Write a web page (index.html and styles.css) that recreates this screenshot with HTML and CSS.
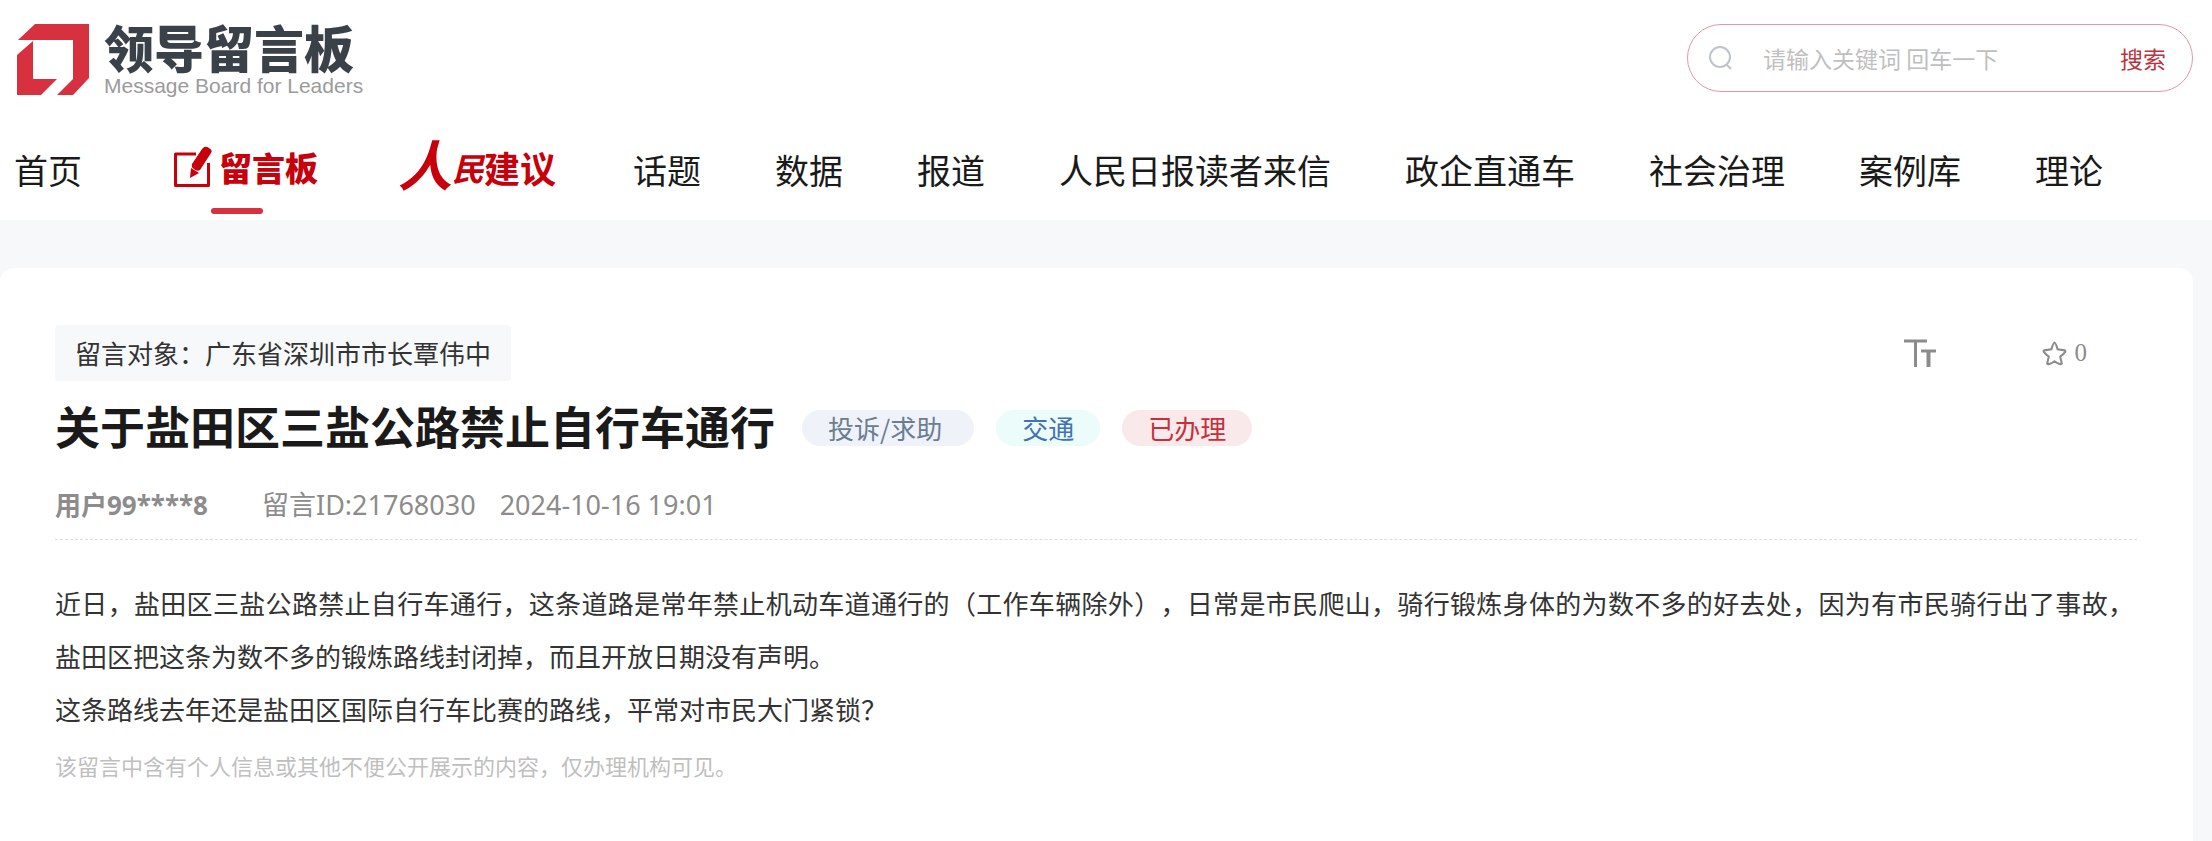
FILE: index.html
```html
<!DOCTYPE html>
<html lang="zh-CN">
<head>
<meta charset="utf-8">
<title>领导留言板</title>
<link rel="stylesheet" href="styles.css">
</head>
<body>
<header class="site-header">
  <div class="top-row">
    <a class="logo" href="#">
      <svg class="logo-mark" viewBox="0 0 72 72" aria-hidden="true">
        <path fill="#d7303f" d="M18 0H72V54L56 71H40L56 55V16H1ZM0 31 16 17V55H40L24 71H0Z"/>
      </svg>
      <span class="logo-text">
        <span class="logo-name">领导留言板</span>
        <span class="logo-sub">Message Board for Leaders</span>
      </span>
    </a>
    <form class="search">
      <svg class="search-icon" viewBox="0 0 24 24" aria-hidden="true"><circle cx="11" cy="11" r="10"/><path d="M17 18l5 5"/></svg>
      <input class="search-input" type="text" placeholder="请输入关键词 回车一下" aria-label="搜索关键词">
      <button class="search-button" type="submit">搜索</button>
    </form>
  </div>
  <nav class="nav">
    <a class="nav-link" href="#">首页</a>
    <a class="nav-link nav-board" href="#">
      <svg class="pen-icon" viewBox="0 0 38 42" aria-hidden="true">
        <path fill="none" stroke="#c7000b" stroke-width="3" stroke-linejoin="round" d="M22 8H1.500V39.500H34.500V17"/>
        <path fill="#c7000b" d="M28 3Q31-1 35 2Q39 4 37 7L26 24Q23 26 20 23Q17 22 18 18ZM17 22L25 27L16 32Z"/>
      </svg>
      <span>留言板</span>
    </a>
    <a class="nav-link nav-advice" href="#"><span class="script-large">人</span><span class="script-small">民</span><span>建议</span></a>
    <a class="nav-link" href="#">话题</a>
    <a class="nav-link" href="#">数据</a>
    <a class="nav-link" href="#">报道</a>
    <a class="nav-link" href="#">人民日报读者来信</a>
    <a class="nav-link" href="#">政企直通车</a>
    <a class="nav-link" href="#">社会治理</a>
    <a class="nav-link" href="#">案例库</a>
    <a class="nav-link" href="#">理论</a>
  </nav>
</header>
<main class="card">
  <div class="card-top">
    <p class="target">留言对象：广东省深圳市市长覃伟中</p>
    <div class="actions">
      <button class="action" type="button" aria-label="字号">
        <svg class="size-icon" viewBox="0 0 32 28" aria-hidden="true"><path fill="none" stroke="#8c8c8c" stroke-width="3" d="M0 2H23M11.500 2V28"/><path fill="none" stroke="#8c8c8c" stroke-width="3" d="M17 12H32"/><path fill="none" stroke="#8c8c8c" stroke-width="4" d="M24.500 12V28"/></svg>
      </button>
      <button class="action" type="button">
        <svg class="star-icon" viewBox="0 0 24 24" aria-hidden="true"><path d="M12 1.500Q13 1.500 15 8L22 9Q24 10 17.500 15L19 21.500Q18.500 23.500 12 19.500Q5.500 23.500 5 21.500L6.500 15Q0 10 2 9L9 8Q11 1.500 12 1.500Z"/></svg>
        <span>0</span>
      </button>
    </div>
  </div>
  <div class="title-row">
    <h1 class="title">关于盐田区三盐公路禁止自行车通行</h1>
    <span class="tag tag-type">投诉/求助</span>
    <span class="tag tag-field">交通</span>
    <span class="tag tag-done">已办理</span>
  </div>
  <div class="meta">
    <strong class="meta-user">用户99****8</strong>
    <span>留言ID:21768030</span>
    <time>2024-10-16 19:01</time>
  </div>
  <div class="content">
    <p>近日，盐田区三盐公路禁止自行车通行，这条道路是常年禁止机动车道通行的（工作车辆除外），日常是市民爬山，骑行锻炼身体的为数不多的好去处，因为有市民骑行出了事故，盐田区把这条为数不多的锻炼路线封闭掉，而且开放日期没有声明。</p>
    <p>这条路线去年还是盐田区国际自行车比赛的路线，平常对市民大门紧锁？</p>
  </div>
  <p class="notice">该留言中含有个人信息或其他不便公开展示的内容，仅办理机构可见。</p>
</main>
</body>
</html>
```
FILE: styles.css
```css
* {
  box-sizing: border-box;
}

body {
  display: flex;
  flex-direction: column;
  min-height: 100vh;
  margin: 0;
  background: #f6f8fa;
  color: #333;
  font-family: "Noto Sans CJK SC", sans-serif;
  font-size: 26px;
  text-spacing-trim: space-all;
}

p,
h1 {
  margin: 0;
}

a {
  color: inherit;
  text-decoration: none;
}

button,
input {
  padding: 0;
  border: 0;
  background: none;
  font: inherit;
}

.site-header {
  background: #fff;
}

.top-row {
  display: flex;
  justify-content: space-between;
  align-items: flex-start;
  padding: 24px 19px 0 17px;
}

.logo {
  display: flex;
  gap: 15px;
}

.logo-mark {
  width: 72px;
  height: 72px;
}

.logo-text {
  display: flex;
  flex-direction: column;
  gap: 6px;
}

.logo-name {
  color: #3b4148;
  font-size: 50px;
  font-weight: 900;
  line-height: 44px;
}

.logo-sub {
  color: #9b9b9b;
  font-family: "Liberation Sans", Arial, sans-serif;
  font-size: 21px;
  line-height: 24px;
}

.search {
  display: flex;
  align-items: center;
  width: 506px;
  height: 68px;
  padding: 0 26px 0 21px;
  border: 1px solid #e8969c;
  border-radius: 34px;
  font-size: 23px;
}

.search-icon {
  width: 24px;
  height: 24px;
  margin-right: 30px;
  fill: none;
  stroke: #bfc4cb;
  stroke-width: 2;
}

.search-input {
  flex: 1;
  min-width: 0;
  outline: 0;
}

.search-input::placeholder {
  color: #bfbfbf;
}

.search-button {
  color: #b8353f;
}

.nav {
  display: flex;
  gap: 74px;
  height: 96px;
  margin-top: 26px;
  padding: 0 14px;
}

.nav-link {
  display: flex;
  align-items: center;
  padding-bottom: 6px;
  color: #1a1a1a;
  font-size: 34px;
  white-space: nowrap;
}

.nav-board {
  position: relative;
  gap: 7px;
  padding: 0 0 10px 18px;
  color: #c7000b;
  font-size: 33px;
  font-weight: 900;
}

.nav-board::after {
  content: "";
  position: absolute;
  bottom: 6px;
  left: calc(50% - 26px);
  width: 52px;
  height: 6px;
  border-radius: 3px;
  background: #d7303f;
}

.pen-icon {
  width: 38px;
  height: 42px;
}

.nav-advice {
  width: 167px;
  padding: 0 0 10px 6px;
  color: #c7000b;
  font-size: 36px;
  font-weight: 700;
}

.script-large {
  padding-bottom: 10px;
  font-size: 54px;
  font-style: italic;
}

.script-small {
  font-size: 32px;
  font-style: italic;
}

.card {
  flex: 1;
  margin: 48px 19px 0 0;
  padding: 57px 56px 56px 55px;
  border-radius: 14px 14px 0 0;
  background: #fff;
}

.card-top {
  display: flex;
  justify-content: space-between;
}

.target {
  padding: 0 20px;
  border-radius: 4px;
  background: #f6f8fa;
  line-height: 56px;
}

.actions {
  display: flex;
  align-items: center;
  gap: 106px;
  padding-right: 50px;
}

.action {
  display: flex;
  align-items: center;
  gap: 8px;
  color: #8c8c8c;
  font-family: "Liberation Serif", serif;
  font-size: 25px;
}

.size-icon {
  width: 32px;
  height: 28px;
}

.star-icon {
  width: 25px;
  height: 25px;
  fill: none;
  stroke: #8c8c8c;
  stroke-width: 2;
}

.title-row {
  display: flex;
  align-items: center;
  gap: 22px;
  margin-top: 14px;
}

.title {
  margin-right: 5px;
  padding-bottom: 4px;
  color: #1a1a1a;
  font-size: 45px;
  line-height: 62px;
}

.tag {
  padding: 0 26px;
  border-radius: 18px;
  line-height: 36px;
}

.tag-type {
  padding-right: 32px;
  background: #eff3f9;
  color: #6b7d93;
}

.tag-field {
  background: #ecfcfa;
  color: #4272b4;
}

.tag-done {
  background: #fae9ea;
  color: #c4303c;
}

.meta {
  display: flex;
  gap: 24px;
  margin-top: 24px;
  padding-bottom: 14px;
  border-bottom: 1px dashed #ddd;
  color: #8c8c8c;
  font-family: "Noto Sans", "Noto Sans CJK SC", sans-serif;
  font-size: 27px;
  line-height: 40px;
}

.meta-user {
  margin-right: 30px;
  font-size: 26px;
}

.content {
  margin-top: 36px;
  padding-right: 3px;
  line-height: 53px;
  text-align: justify;
}

.notice {
  margin-top: 8px;
  color: #bfbfbf;
  font-size: 22px;
  line-height: 44px;
}
```
